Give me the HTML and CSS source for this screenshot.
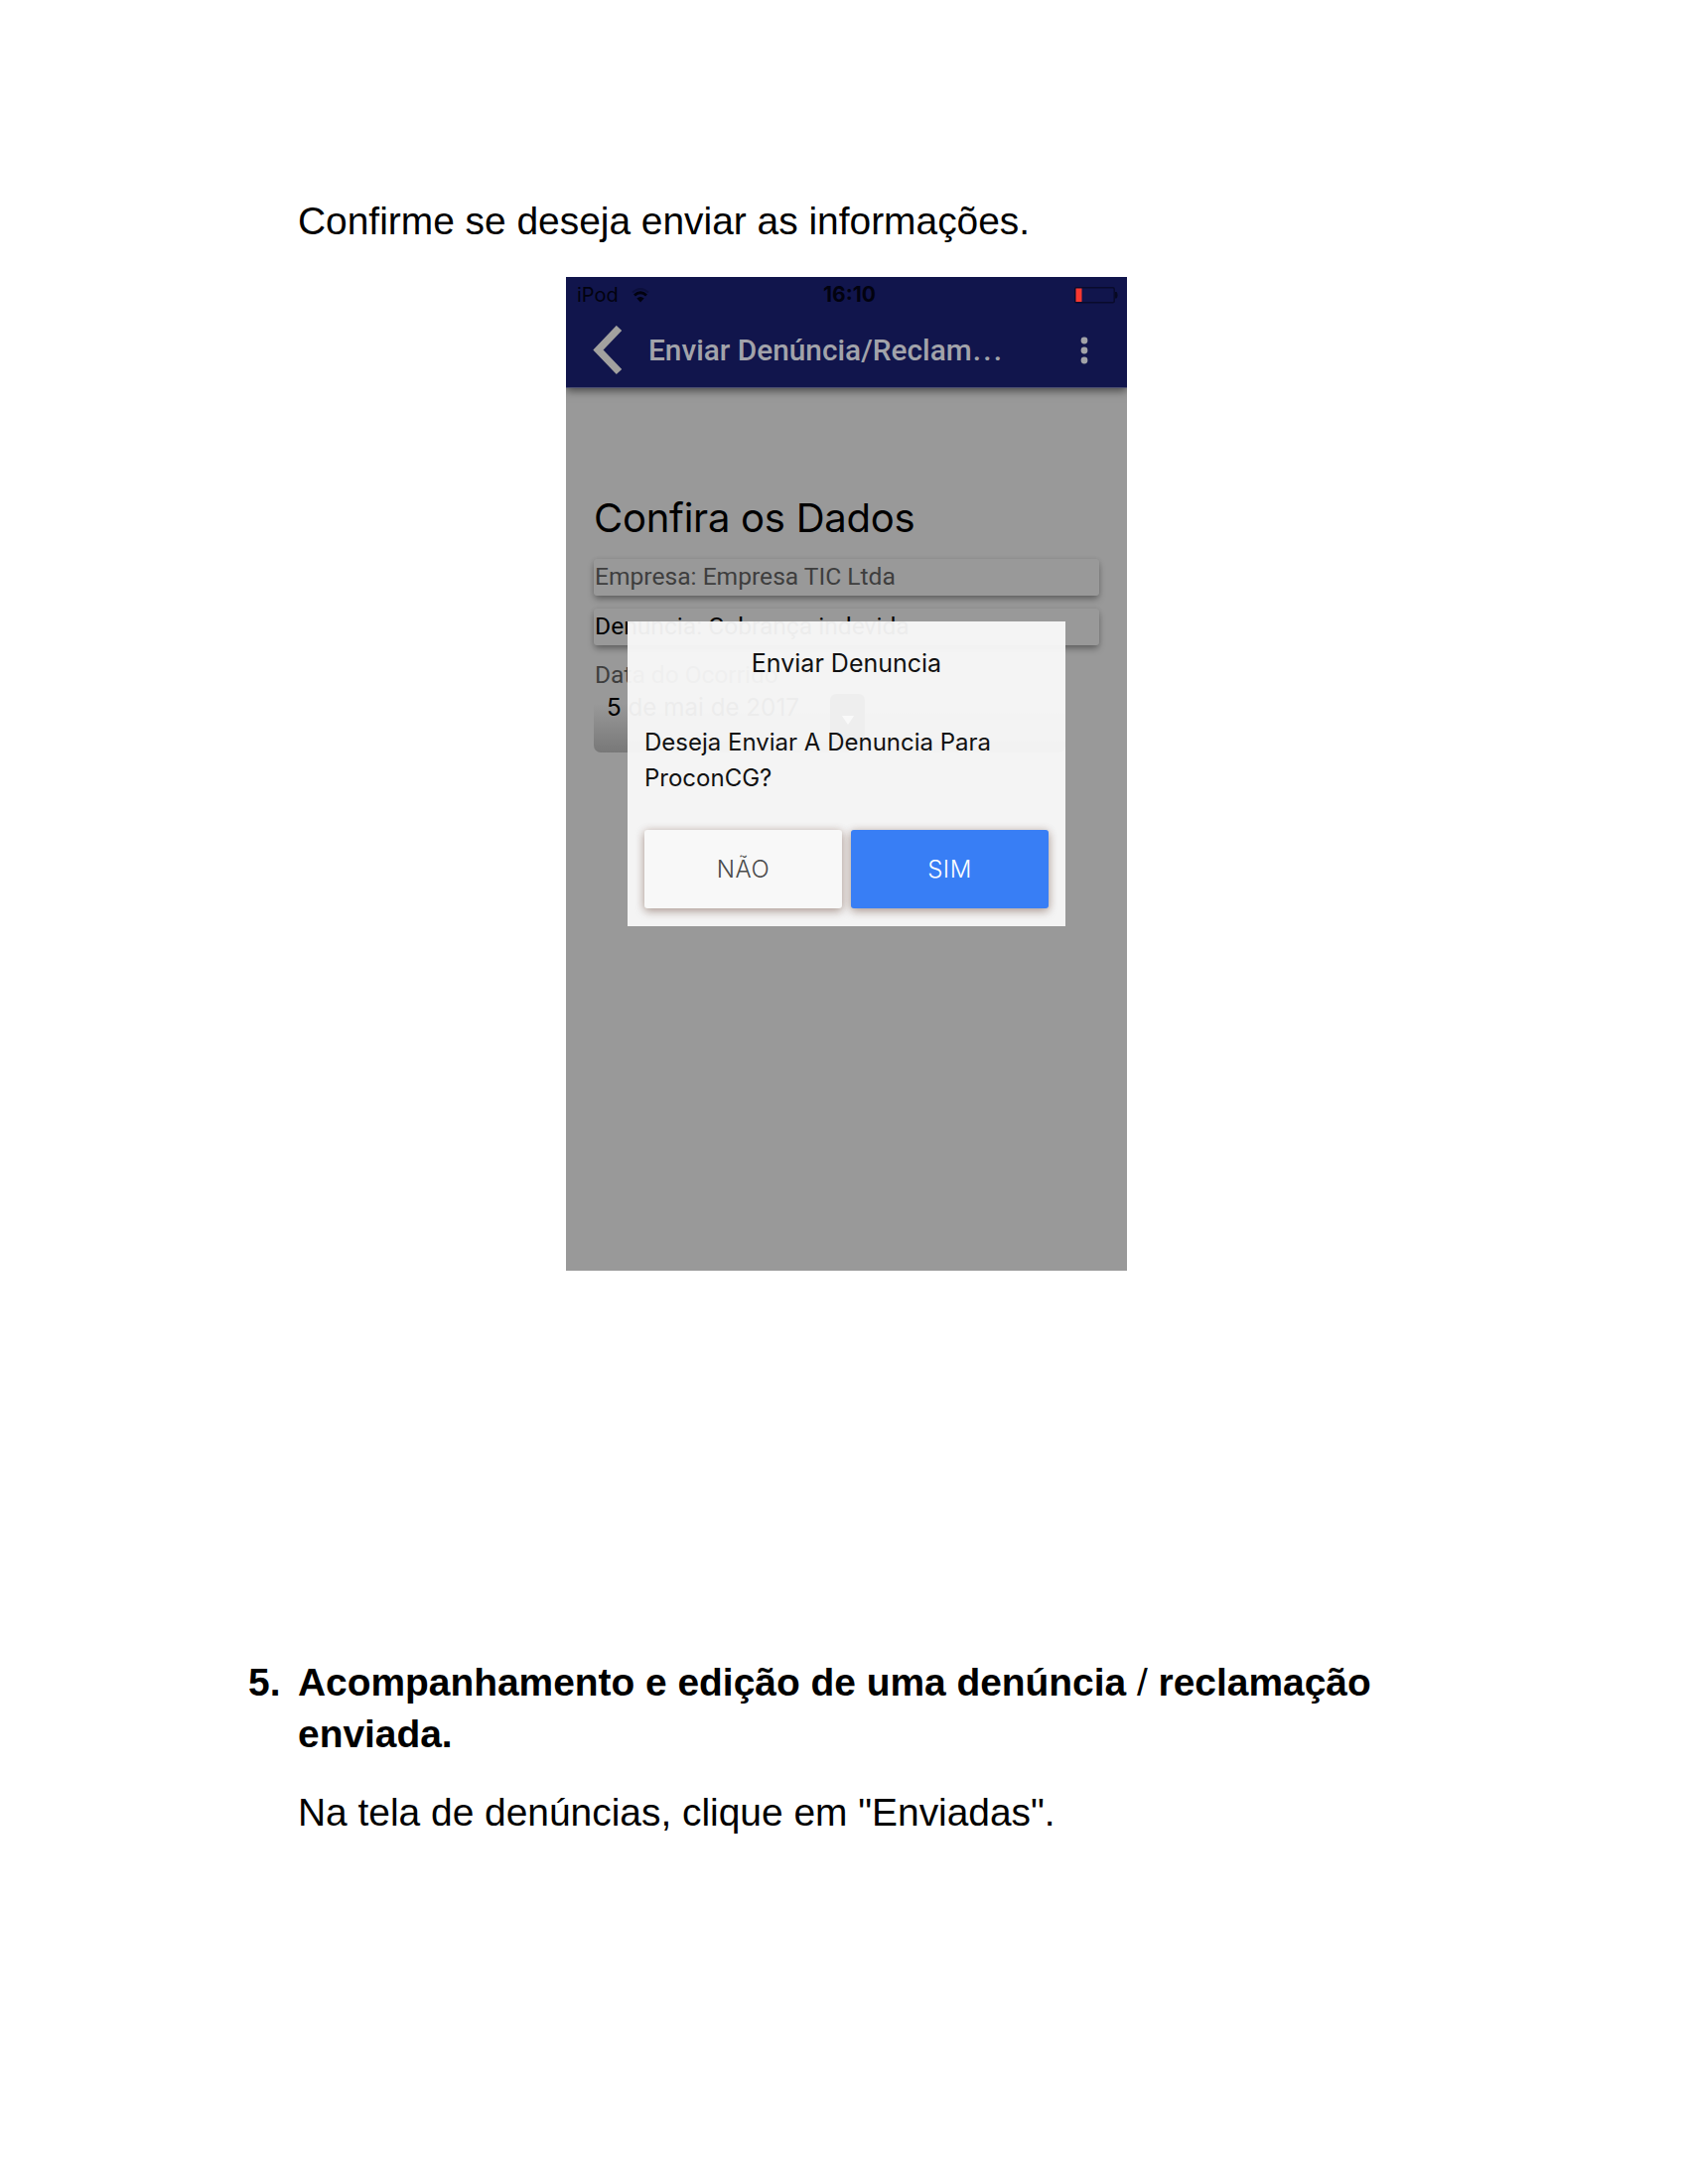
FILE: index.html
```
<!DOCTYPE html>
<html lang="pt-BR">
<head>
<meta charset="utf-8">
<title>Envio de denúncia</title>
<link rel="stylesheet" href="styles.css">
</head>
<body>
<main class="page">
  <p class="para">Confirme se deseja enviar as informações.</p>

  <section class="phone">
    <header class="appbar">
      <div class="status">
        <div class="carrier"><span>iPod</span>
          <svg width="20" height="16" viewBox="0 0 20 16"><path d="M2 5.500Q10-1.500 18 5.500" fill="none" stroke="#0c0f3c" stroke-width="2"/><path d="M4 8.500Q10 3 16 8.500" fill="none" stroke="#02020f" stroke-width="2.800"/><path d="M10 15.500L6.300 11.500Q10 8.500 13.700 11.500Z" fill="#02020f"/></svg>
        </div>
        <span class="time">16:10</span>
        <svg class="battery" width="44" height="17" viewBox="0 0 44 17"><rect x=".75" y=".75" width="39.500" height="15" rx="1.500" fill="none" stroke="#090b2c" stroke-width="1.500"/><rect x="1.500" y="1.500" width="6" height="13.500" fill="#f9382f"/><path d="M41 5h1.500q1 1 1 3.300t-1 3.200H41z" fill="#070922"/></svg>
      </div>
      <div class="toolbar">
        <svg width="30" height="50" viewBox="0 0 30 50"><path d="M26.500 2.500L5.500 24.500L26.500 46.500" fill="none" stroke="#a2a19f" stroke-width="7.500"/></svg>
        <h1 class="title">Enviar Denúncia/Reclam<span class="dots">...</span></h1>
        <svg width="8" height="28" viewBox="0 0 8 28"><g fill="#a2a3a8"><circle cx="4" cy="4" r="3.400"/><circle cx="4" cy="14" r="3.400"/><circle cx="4" cy="24" r="3.400"/></g></svg>
      </div>
    </header>
    <div class="content">
      <h2 class="heading">Confira os Dados</h2>
      <div class="card muted">Empresa: Empresa TIC Ltda</div>
      <div class="card">Denuncia: Cobrança indevida</div>
      <div class="label">Data do Ocorrido</div>
      <div class="select"><span>5 de mai de 2017</span><span class="arrow"><svg width="12" height="9" viewBox="0 0 12 9"><path d="M0 0h12L6 9z" fill="#fff"/></svg></span></div>
    </div>
    <div class="modal">
      <h3 class="modal-title">Enviar Denuncia</h3>
      <p class="modal-text">Deseja Enviar A Denuncia Para<br>ProconCG?</p>
      <div class="actions">
        <button class="btn">NÃO</button>
        <button class="btn primary">SIM</button>
      </div>
    </div>
  </section>

  <section class="step">
    <span class="num">5.</span>
    <h2 class="step-title">Acompanhamento e edição de uma denúncia <span class="slash">/</span> reclamação<br>enviada.</h2>
  </section>
  <p class="para after">Na tela de denúncias, clique em "Enviadas".</p>
</main>
</body>
</html>
```
FILE: styles.css
```
* { box-sizing: border-box; }
body { margin: 0; background: #fff; color: #000; font-family: "Liberation Sans", Arial, sans-serif; }
p, h1, h2, h3 { margin: 0; font-weight: 400; }
svg { display: block; flex: none; }
.page { width: 1700px; padding: 197px 250px 0; }
.para { padding-left: 50px; font-size: 38.9px; line-height: 52px; white-space: nowrap; }
.phone { position: relative; width: 565px; height: 1001px; margin: 30px 0 0 320px; background: #999; overflow: hidden; }
.appbar { position: relative; height: 112px; background: #11154c; border-bottom: 1px solid #4c4f70; box-shadow: 0 2px 9px rgba(0,0,0,.6); }
.status { display: flex; justify-content: space-between; align-items: center; height: 36px; padding: 0 9px 0 11px; font: 20px/36px Inter, sans-serif; color: #02020f; }
.carrier { display: flex; align-items: center; gap: 12px; width: 110px; }
.time { font-weight: 700; font-size: 21px; }
.battery { margin-left: 62px; }
.toolbar { display: flex; align-items: center; height: 75px; padding: 0 39px 0 27px; }
.title { margin-left: 26px; flex: 1; font: 500 29.8px/40px Roboto, sans-serif; color: #a2a3aa; white-space: nowrap; }
.dots { letter-spacing: 2.3px; margin-left: 1px; }
.content { padding: 100px 28px 0; }
.heading { font: 40px/60px Inter, sans-serif; letter-spacing: -.25px; margin-left: 0; padding-top: 1px; }
.card { height: 37px; margin-bottom: 12.5px; padding-left: 1px; border-radius: 3px; font: 24.6px/35px Roboto, sans-serif; box-shadow: 0 4px 7px -1px rgba(0,0,0,.38), 0 0 4px rgba(0,0,0,.08); white-space: nowrap; }
.heading + .card { margin-top: 11px; }
.muted, .label { color: #3e3e3e; }
.label { font: 24.5px/36px Roboto, sans-serif; padding-left: 1px; }
.select { display: flex; align-items: flex-start; justify-content: space-between; width: 475px; height: 60px; padding: 1px 0 0 13px; border-radius: 7px; font: 24.2px/28px Inter, sans-serif; background: linear-gradient(#999 18%, #787878); }
.arrow { display: flex; align-items: center; justify-content: center; width: 35px; height: 53px; margin-right: 202px; border-radius: 6px; background: #333; }
.modal { position: absolute; left: 62px; top: 347px; width: 441px; height: 307px; padding: 24px 17px 17px; background: rgba(249,249,249,.95); font-family: Inter, sans-serif; color: #111; }
.modal-title { text-align: center; font-size: 25px; line-height: 36px; }
.modal-text { margin-top: 44px; font-size: 24px; line-height: 36px; white-space: nowrap; }
.actions { display: flex; gap: 9px; margin-top: 34px; }
.btn { flex: 1; height: 79px; padding: 0; border: 0; border-radius: 3px; background: #f8f8f8; color: #4a4a4a; font: 300 24px/79px Inter, sans-serif; letter-spacing: .5px; box-shadow: 0 3px 10px rgba(70,30,15,.36), 0 0 9px rgba(120,70,50,.15); }
.primary { background: #387ef5; color: #fff; }
.step { display: flex; margin-top: 389px; font-size: 38.9px; line-height: 51.5px; }
.num { width: 50px; font-weight: 700; }
.step-title { font-size: 38.9px; font-weight: 700; white-space: nowrap; }
.slash { font-weight: 400; }
.after { margin-top: 28px; }
```
